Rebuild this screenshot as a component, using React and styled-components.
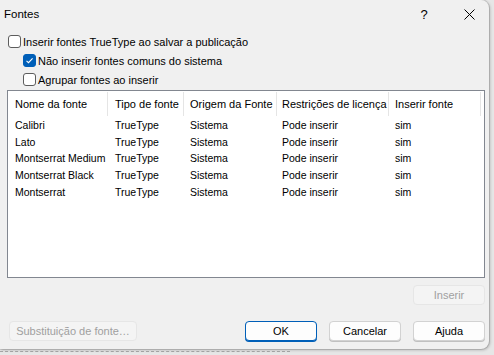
import React from "react";
import styled, { createGlobalStyle } from "styled-components";

const Global = createGlobalStyle`
  html, body { margin: 0; padding: 0; }
  body {
    width: 494px; height: 355px; overflow: hidden;
    background: #e6e6e6;
    font-family: "Liberation Sans", Arial, sans-serif;
    font-size: 11px; color: #000;
  }
`;

const Page = styled.div`
  width: 494px;
  height: 355px;
  position: relative;
  overflow: hidden;
  background: #e6e6e6;
`;

const Backdrop = styled.div`
  position: absolute;
  left: 0;
  width: 290px;
  top: 351px;
  border-top: 1px dashed #a8a8a8;
`;

const Dialog = styled.div`
  position: relative;
  width: 489px;
  height: 349px;
  background: #f0f0f0;
  border-radius: 0 8px 8px 0;
  box-shadow: 1px 1px 3px rgba(0,0,0,0.25), 0 0 0 1px #cfcfcf;
  display: flex;
  flex-direction: column;
`;

const TitleBar = styled.div`
  height: 28px;
  display: flex;
  align-items: center;
  padding-left: 4px;
  gap: 5px;
`;

const Title = styled.div`
  flex: 1;
  font-size: 11.5px;
`;

const TitleButton = styled.div`
  width: 40px;
  height: 28px;
  display: flex;
  align-items: center;
  justify-content: center;
  font-size: 13px;
`;

const Body = styled.div`
  flex: 1;
  display: flex;
  flex-direction: column;
  padding: 4px 4px 0 7px;
`;

const CheckRow = styled.label`
  display: flex;
  align-items: center;
  height: 19px;
  padding-left: ${p => p.$indent}px;
  gap: 2px;
  white-space: nowrap;
  font-size: 11px;
`;

const Box = styled.span`
  width: 11px;
  height: 11px;
  border: 1px solid ${p => (p.$checked ? "#005fb8" : "#5d5d5d")};
  background: ${p => (p.$checked ? "#005fb8" : "#fff")};
  border-radius: 3px;
  display: flex;
  align-items: center;
  justify-content: center;
  flex: none;
`;

const List = styled.div`
  margin-top: 1px;
  height: 188px;
  border: 1px solid #828790;
  background: #fff;
  box-sizing: border-box;
`;

const Grid = styled.div`
  display: grid;
  grid-template-columns: 100px 76px 93px 112px 92px;
`;

const HeadCell = styled.div`
  display: flex;
  align-items: center;
  padding-left: ${p => p.$pad}px;
  border-right: 1px solid #e5e5e5;
  white-space: nowrap;
  box-sizing: border-box;
  margin: 1px 0 1px;
  height: 24px;
`;

const Cell = styled.div`
  height: 16.6px;
  display: flex;
  align-items: center;
  padding-left: ${p => p.$pad}px;
  white-space: nowrap;
  font-size: 10.5px;
  color: #000;
`;

const InsertRow = styled.div`
  display: flex;
  justify-content: flex-end;
  margin-top: 7px;
`;

const Button = styled.button`
  width: ${p => p.$w || 72}px;
  height: 20px;
  box-sizing: border-box;
  border-radius: 4px;
  font-family: "Liberation Sans", Arial, sans-serif;
  font-size: 11px;
  padding: 0;
  white-space: nowrap;
  background: ${p => (p.$disabled ? "#f4f4f4" : "#fdfdfd")};
  color: ${p => (p.$disabled ? "#a0a0a0" : "#000")};
  border: 1px solid ${p => (p.$default ? "#005fb8" : p.$disabled ? "#e6e6e6" : "#d2d2d2")};
  box-shadow: ${p => (p.$disabled ? "none" : p.$default ? "0 1px 0 #005fb8" : "0 1px 0 #c0c0c0")};
`;

const Footer = styled.div`
  display: flex;
  align-items: center;
  margin-top: 16px;
  padding-left: 2px;
  gap: 12px;
`;

const Spacer = styled.div`
  flex: 1;
`;

const Check = () => (
  <svg width="9" height="9" viewBox="0 0 9 9">
    <path d="M1.5 4.8 L3.5 6.7 L7.6 2.3" fill="none" stroke="#fff" strokeWidth="1.1" />
  </svg>
);

const rows = ["Calibri", "Lato", "Montserrat Medium", "Montserrat Black", "Montserrat"];
const heads = ["Nome da fonte", "Tipo de fonte", "Origem da Fonte", "Restrições de licença", "Inserir fonte"];
const pads = [7, 7, 6, 5, 6];

export default function App() {
  return (
    <Page>
      <Global />
      <Backdrop />
      <Dialog>
        <TitleBar>
          <Title>Fontes</Title>
          <TitleButton>?</TitleButton>
          <TitleButton>
            <svg width="11" height="11" viewBox="0 0 11 11">
              <path d="M0.5 0.5 L10.5 10.5 M10.5 0.5 L0.5 10.5" stroke="#000" strokeWidth="1" />
            </svg>
          </TitleButton>
        </TitleBar>
        <Body>
          <CheckRow $indent={1}>
            <Box />
            <span>Inserir fontes TrueType ao salvar a publicação</span>
          </CheckRow>
          <CheckRow $indent={16}>
            <Box $checked><Check /></Box>
            <span>Não inserir fontes comuns do sistema</span>
          </CheckRow>
          <CheckRow $indent={16}>
            <Box />
            <span>Agrupar fontes ao inserir</span>
          </CheckRow>
          <List>
            <Grid>
              {heads.map((h, i) => <HeadCell key={h} $pad={pads[i]}>{h}</HeadCell>)}
              {rows.map(r => (
                <React.Fragment key={r}>
                  <Cell $pad={pads[0]}>{r}</Cell>
                  <Cell $pad={pads[1]}>TrueType</Cell>
                  <Cell $pad={pads[2]}>Sistema</Cell>
                  <Cell $pad={pads[3]}>Pode inserir</Cell>
                  <Cell $pad={pads[4]}>sim</Cell>
                </React.Fragment>
              ))}
            </Grid>
          </List>
          <InsertRow>
            <Button $disabled>Inserir</Button>
          </InsertRow>
          <Footer>
            <Button $disabled $w={128}>Substituição de fonte…</Button>
            <Spacer />
            <Button $default>OK</Button>
            <Button>Cancelar</Button>
            <Button>Ajuda</Button>
          </Footer>
        </Body>
      </Dialog>
    </Page>
  );
}
